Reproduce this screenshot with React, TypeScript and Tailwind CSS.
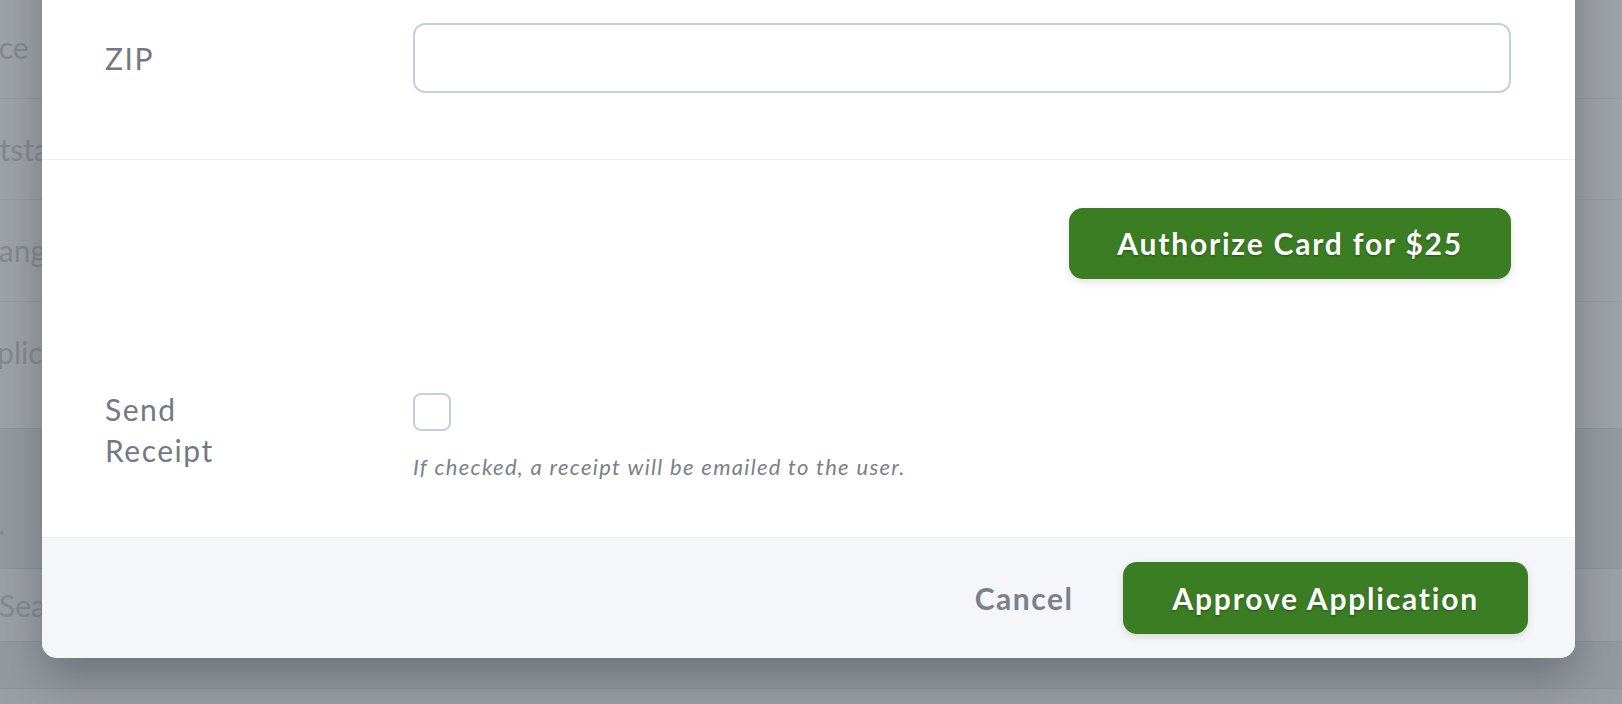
import React from "react";

const font = { fontFamily: "Lato, 'Noto Sans', sans-serif" };

function BackgroundPage() {
  return (
    <div className="flex flex-col w-full h-full">
      <div className="bg-[#9ea2a9] -mt-[3px]">
        <div className="h-[102px] flex items-center border-b border-[#959aa1]">
          <span className="-ml-[74px] text-[30px] text-[#848990]">Balance</span>
        </div>
        <div className="h-[101px] flex items-center border-b border-[#959aa1]">
          <span className="-ml-[41px] text-[30px] text-[#848990]">Outstanding</span>
        </div>
        <div className="h-[102px] flex items-center border-b border-[#959aa1]">
          <span className="-ml-[38px] text-[30px] text-[#848990]">Change</span>
        </div>
        <div className="h-[126px] pt-[28px]">
          <span className="-ml-[40px] text-[30px] text-[#848990]">Application</span>
        </div>
      </div>
      <div className="bg-[#959aa1] border-t border-[#8f939a] h-[140px] flex items-center">
        <span className="-ml-[2px] mt-[50px] text-[30px] text-[#848990]">.</span>
      </div>
      <div className="bg-[#9ca0a7] border-y border-[#8f939a] h-[74px] flex items-center">
        <span className="-ml-[1px] text-[30px] text-[#868b92]">Search</span>
      </div>
      <div className="h-[47px] border-b border-[#8e9299] bg-[#959aa1]" />
      <div className="flex-1 bg-[#9a9ea5]" />
    </div>
  );
}

function Modal() {
  return (
    <div className="w-[1533px] bg-white rounded-[15px] overflow-hidden shadow-[0_20px_45px_rgba(40,44,52,0.35)]">
      {/* card section */}
      <div className="pl-[63px] pr-[64px] pt-[40px] pb-[66px] flex flex-col gap-[40px]">
        <div className="grid grid-cols-[308px_1fr] items-center">
          <label className="text-[30px] leading-[41px] tracking-[0.05em] text-[#737983]">Card Number</label>
          <input className="h-[70px] border-2 border-[#c5d0dc] rounded-[12px] outline-none" />
        </div>
        <div className="grid grid-cols-[308px_1fr] items-center">
          <label className="text-[30px] leading-[41px] tracking-[0.05em] text-[#737983]">ZIP</label>
          <input className="h-[70px] border-2 border-[#c5d0dc] rounded-[12px] outline-none" />
        </div>
      </div>

      <div className="border-t border-[#eef0f4] pl-[63px] pr-[64px] pt-[48px] pb-[54px]">
        <div className="flex justify-end">
          <button className="h-[71px] px-[48px] rounded-[14px] bg-[#3a7d23] text-white text-[30px] font-bold tracking-[0.06em] shadow-[0_3px_8px_rgba(0,0,0,0.12)] [text-shadow:0_1px_2px_rgba(0,0,0,0.35)]">
            Authorize Card for $25
          </button>
        </div>
        <div className="grid grid-cols-[308px_1fr] mt-[110px]">
          <label className="w-[170px] text-[30px] leading-[41px] tracking-[0.05em] text-[#737983]">Send Receipt</label>
          <div className="flex flex-col items-start pt-[4px]">
            <span className="w-[38px] h-[38px] border-2 border-[#c5d0dc] rounded-[8px]" />
            <p className="mt-[19px] text-[22px] leading-[33px] italic tracking-[0.06em] text-[#7b818a]">
              If checked, a receipt will be emailed to the user.
            </p>
          </div>
        </div>
      </div>

      <div className="border-t border-[#eceff3] bg-[#f4f6f9] pl-[64px] pr-[47px] py-[24px] flex justify-end items-center gap-[50px]">
        <button className="text-[30px] font-bold tracking-[0.05em] text-[#7b8089]">Cancel</button>
        <button className="h-[72px] px-[49px] rounded-[14px] bg-[#3a7d23] text-white text-[30px] font-bold tracking-[0.06em] shadow-[0_3px_8px_rgba(0,0,0,0.12)] [text-shadow:0_1px_2px_rgba(0,0,0,0.35)]">
          Approve Application
        </button>
      </div>
    </div>
  );
}

export default function App() {
  return (
    <div className="relative w-full h-[704px] overflow-hidden" style={font}>
      <BackgroundPage />
      <div className="absolute inset-0 flex justify-center items-end pb-[46px] pl-[42px] pr-[47px]">
        <Modal />
      </div>
    </div>
  );
}
